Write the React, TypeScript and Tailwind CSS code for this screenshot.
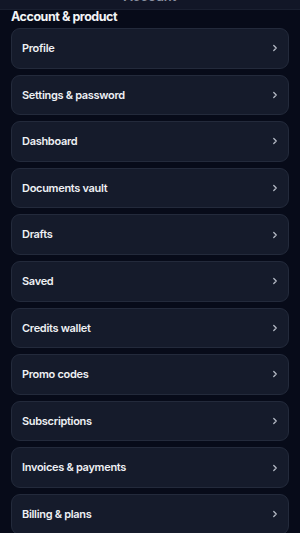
import { ChevronRight } from 'lucide-react';

const items = [
  'Profile',
  'Settings & password',
  'Dashboard',
  'Documents vault',
  'Drafts',
  'Saved',
  'Credits wallet',
  'Promo codes',
  'Subscriptions',
  'Invoices & payments',
  'Billing & plans',
];

export default function App() {
  return (
    <div className="h-[533px] w-[300px] overflow-hidden bg-[#070b19] font-['Inter',sans-serif] text-white">
      <div className="h-[10px] overflow-hidden border-b border-[#1a1f30] bg-[#121627]">
        <div className="-mt-[12px] text-center text-[13px] font-semibold leading-[16px] text-[#8a90a0]">Account</div>
      </div>
      <div className="px-[11px]">
        <h2 className="-mt-[1px] text-[12.5px] font-bold leading-[16px] tracking-[-0.45px] text-[#f3f4f6]">
          Account &amp; product
        </h2>
        <div className="mt-[3px] flex flex-col gap-[6px]">
          {items.map((item) => (
            <div
              key={item}
              className="flex h-[40.6px] items-center justify-between rounded-[9px] border border-[#232a3b] bg-[#151b2b] pl-[10px] pr-[8px]"
            >
              <span className="text-[11px] font-semibold tracking-[-0.3px] text-[#eef0f4]">{item}</span>
              <ChevronRight className="h-[10px] w-[10px] text-[#b4b9c4]" strokeWidth={3} />
            </div>
          ))}
        </div>
      </div>
    </div>
  );
}
